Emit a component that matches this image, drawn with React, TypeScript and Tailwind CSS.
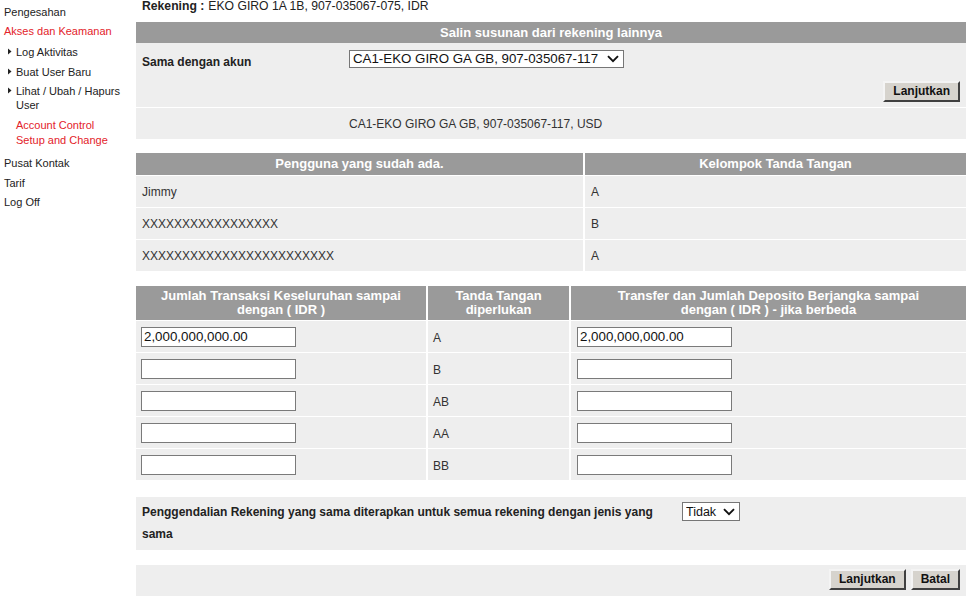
import React from "react";

function Tri() {
  return (
    <svg width="4" height="7" viewBox="0 0 4 7" className="mt-[3px] shrink-0">
      <path d="M0 0.5 L3.5 3.5 L0 6.5 Z" fill="#222" />
    </svg>
  );
}

function Chevron() {
  return (
    <svg
      width="12"
      height="8"
      viewBox="0 0 12 8"
      className="pointer-events-none absolute right-[5px] top-1/2 -translate-y-1/2"
    >
      <path d="M1 1.2 L6 6.2 L11 1.2" fill="none" stroke="#111" strokeWidth="1.9" />
    </svg>
  );
}

function SelectBox({ value, wide }: { value: string; wide?: boolean }) {
  return (
    <div className={wide ? "relative h-[18px] w-[275px]" : "relative h-[19px] w-[58px]"}>
      <select
        defaultValue={value}
        className={
          wide
            ? "h-full w-full appearance-none rounded-none border border-[#767676] bg-white pl-[3px] text-[13.3px] leading-[16px] text-[#111] outline-none"
            : "h-full w-full appearance-none rounded-none border border-[#767676] bg-white pl-[3px] text-[12.5px] leading-[16px] text-[#111] outline-none"
        }
      >
        <option>{value}</option>
      </select>
      <Chevron />
    </div>
  );
}

function Btn({ children }: { children: React.ReactNode }) {
  return (
    <button className="h-[21px] border-2 border-t-[#f4f4f4] border-l-[#f4f4f4] border-b-[#404040] border-r-[#404040] bg-[#d6d3cd] px-[8px] text-[12px] font-bold leading-[15px] text-[#111]">
      {children}
    </button>
  );
}

function Field({ value }: { value?: string }) {
  return (
    <input
      defaultValue={value ?? ""}
      className="h-[20px] w-[155px] rounded-none border border-[#7a7a7a] bg-white px-[2px] text-[13.33px] text-[#111] outline-none"
    />
  );
}

export default function App() {
  const users = [
    ["Jimmy", "A"],
    ["XXXXXXXXXXXXXXXXX", "B"],
    ["XXXXXXXXXXXXXXXXXXXXXXXX", "A"],
  ];
  const limits = [
    ["2,000,000,000.00", "A", "2,000,000,000.00"],
    ["", "B", ""],
    ["", "AB", ""],
    ["", "AA", ""],
    ["", "BB", ""],
  ];

  return (
    <div className="flex min-h-[597px] w-[978px] bg-white font-['Liberation_Sans',Arial,sans-serif] text-[#333]">
      <aside className="w-[136px] shrink-0 pl-[4px] pt-[5px] text-[11px] leading-[14px] text-[#222]">
        <ul>
          <li>Pengesahan</li>
          <li className="mt-[5px] text-[#e3222a]">Akses dan Keamanan</li>
          <li className="mt-[7px] flex gap-[4px] pl-[4px]">
            <Tri />
            <span>Log Aktivitas</span>
          </li>
          <li className="mt-[6px] flex gap-[4px] pl-[4px]">
            <Tri />
            <span>Buat User Baru</span>
          </li>
          <li className="mt-[5px] flex gap-[4px] pl-[4px]">
            <Tri />
            <span>
              Lihat / Ubah / Hapurs
              <br />
              User
            </span>
          </li>
          <li className="mt-[6px] pl-[12px] leading-[15px] text-[#e3222a]">
            Account Control
            <br />
            Setup and Change
          </li>
          <li className="mt-[8px]">Pusat Kontak</li>
          <li className="mt-[6px]">Tarif</li>
          <li className="mt-[5px]">Log Off</li>
        </ul>
      </aside>

      <main className="w-[830px] text-[12px]">
        <div className="h-[22px] pl-[6px] text-[12.2px] leading-[13px] text-[#222]">
          <b>Rekening :</b>
          <span className="ml-[4px]">EKO GIRO 1A 1B, 907-035067-075, IDR</span>
        </div>

        <section className="bg-[#eeeeee]">
          <div className="flex h-[21px] items-center justify-center bg-[#9a9a9a] text-[13px] font-bold text-white">
            Salin susunan dari rekening lainnya
          </div>
          <div className="flex h-[64px] flex-col">
            <div className="flex items-start pt-[7px]">
              <div className="w-[213px] pl-[6px] pt-[3px] font-bold text-[#222]">Sama dengan akun</div>
              <SelectBox value="CA1-EKO GIRO GA GB, 907-035067-117" wide />
            </div>
            <div className="mb-[5px] mt-auto flex justify-end pr-[6px]">
              <Btn>Lanjutkan</Btn>
            </div>
          </div>
          <div className="h-[1px] bg-white" />
          <div className="flex h-[31px] items-center pl-[213px]">
            CA1-EKO GIRO GA GB, 907-035067-117, USD
          </div>
        </section>

        <section className="mt-[14px] grid grid-cols-[447px_381px] gap-x-[2px] gap-y-[1px]">
          <div className="flex h-[22px] items-center justify-center bg-[#9a9a9a] text-[13px] font-bold text-white">
            Pengguna yang sudah ada.
          </div>
          <div className="flex h-[22px] items-center justify-center bg-[#9a9a9a] text-[13px] font-bold text-white">
            Kelompok Tanda Tangan
          </div>
          {users.map(([name, grp], i) => (
            <React.Fragment key={i}>
              <div className="flex h-[31px] items-center bg-[#eeeeee] pl-[6px]">{name}</div>
              <div className="flex h-[31px] items-center bg-[#eeeeee] pl-[6px]">{grp}</div>
            </React.Fragment>
          ))}
        </section>

        <section className="mt-[15px] grid grid-cols-[290px_141px_395px] gap-x-[2px] gap-y-[1px]">
          <div className="flex h-[34px] flex-col items-center justify-center bg-[#9a9a9a] text-center text-[13px] font-bold leading-[14px] text-white">
            <span>Jumlah Transaksi Keseluruhan sampai</span>
            <span>dengan ( IDR )</span>
          </div>
          <div className="flex h-[34px] flex-col items-center justify-center bg-[#9a9a9a] text-center text-[13px] font-bold leading-[14px] text-white">
            <span>Tanda Tangan</span>
            <span>diperlukan</span>
          </div>
          <div className="flex h-[34px] flex-col items-center justify-center bg-[#9a9a9a] text-center text-[13px] font-bold leading-[14px] text-white">
            <span>Transfer dan Jumlah Deposito Berjangka sampai</span>
            <span>dengan ( IDR ) - jika berbeda</span>
          </div>
          {limits.map(([a, sig, b], i) => (
            <React.Fragment key={i}>
              <div className="flex h-[31px] items-center bg-[#eeeeee] pl-[5px]">
                <Field value={a} />
              </div>
              <div className="flex h-[31px] items-center bg-[#eeeeee] pl-[5px] pt-[2px]">{sig}</div>
              <div className="flex h-[31px] items-center bg-[#eeeeee] pl-[6px]">
                <Field value={b} />
              </div>
            </React.Fragment>
          ))}
        </section>

        <section className="mt-[17px] flex bg-[#eeeeee]">
          <div className="w-[540px] pb-[5px] pl-[6px] pt-[4px] text-[12px] font-bold leading-[22px] text-[#222]">
            Penggendalian Rekening yang sama diterapkan untuk semua rekening dengan jenis yang sama
          </div>
          <div className="pl-[6px] pt-[5px]">
            <SelectBox value="Tidak" />
          </div>
        </section>

        <section className="mt-[15px] flex justify-end gap-[5px] bg-[#eeeeee] pb-[6px] pr-[6px] pt-[4px]">
          <Btn>Lanjutkan</Btn>
          <Btn>Batal</Btn>
        </section>
      </main>
    </div>
  );
}
